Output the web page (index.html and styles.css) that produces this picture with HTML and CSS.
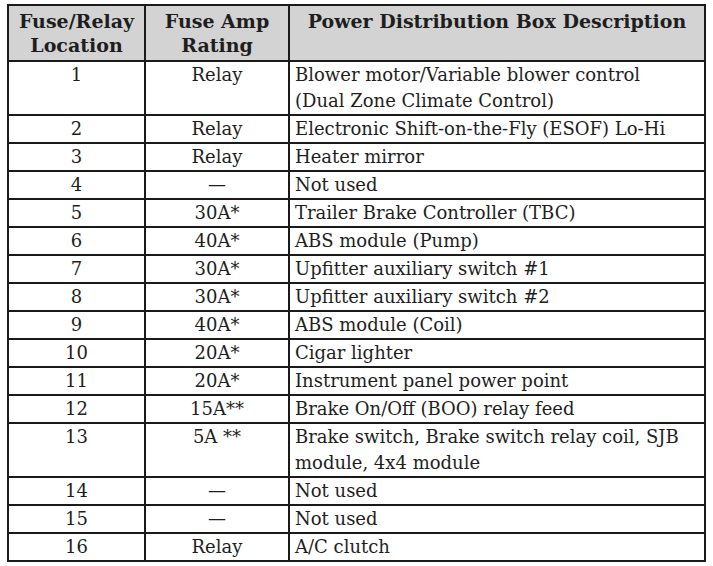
FILE: index.html
```html
<!DOCTYPE html>
<html>
<head>
<meta charset="utf-8">
<link rel="stylesheet" href="styles.css">
</head>
<body>
<table class="fuse">
<colgroup><col class="c1"><col class="c2"><col class="c3"></colgroup>
<thead>
<tr><th>Fuse/Relay<br>Location</th><th>Fuse Amp<br>Rating</th><th class="top">Power Distribution Box Description</th></tr>
</thead>
<tbody>
<tr><td>1</td><td>Relay</td><td class="d">Blower motor/Variable blower control<br>(Dual Zone Climate Control)</td></tr>
<tr><td>2</td><td>Relay</td><td class="d">Electronic Shift-on-the-Fly (ESOF) Lo-Hi</td></tr>
<tr><td>3</td><td>Relay</td><td class="d">Heater mirror</td></tr>
<tr><td>4</td><td>—</td><td class="d">Not used</td></tr>
<tr><td>5</td><td>30A*</td><td class="d">Trailer Brake Controller (TBC)</td></tr>
<tr><td>6</td><td>40A*</td><td class="d">ABS module (Pump)</td></tr>
<tr><td>7</td><td>30A*</td><td class="d">Upfitter auxiliary switch #1</td></tr>
<tr><td>8</td><td>30A*</td><td class="d">Upfitter auxiliary switch #2</td></tr>
<tr><td>9</td><td>40A*</td><td class="d">ABS module (Coil)</td></tr>
<tr><td>10</td><td>20A*</td><td class="d">Cigar lighter</td></tr>
<tr><td>11</td><td>20A*</td><td class="d">Instrument panel power point</td></tr>
<tr><td>12</td><td>15A**</td><td class="d">Brake On/Off (BOO) relay feed</td></tr>
<tr><td>13</td><td>5A **</td><td class="d">Brake switch, Brake switch relay coil, SJB<br>module, 4x4 module</td></tr>
<tr><td>14</td><td>—</td><td class="d">Not used</td></tr>
<tr><td>15</td><td>—</td><td class="d">Not used</td></tr>
<tr><td>16</td><td>Relay</td><td class="d">A/C clutch</td></tr>
</tbody>
</table>
</body>
</html>
```
FILE: styles.css
```css
html, body { margin: 0; padding: 0; background: #fff; }
body { padding: 4px 0 0 7px; }
.fuse {
  border-collapse: collapse;
  table-layout: fixed;
  width: 697px;
  font-family: "DejaVu Serif", "Liberation Serif", serif;
  font-size: 18px;
  color: #1e1e1e;
  border: 2px solid #1a1a1a;
}
.c1 { width: 137px; }
.c2 { width: 144px; }
.c3 { width: 416px; }
.fuse th, .fuse td {
  border: 2px solid #1a1a1a;
  padding: 0;
  vertical-align: top;
}
.fuse th {
  background: #d3d3d3;
  font-weight: bold;
  line-height: 24px;
  height: 51px;
  padding-top: 3px;
  text-align: center;
  font-size: 19px;
}
.fuse td {
  line-height: 26px;
  text-align: center;
}
.fuse td.d { text-align: left; padding-left: 5px; }
```
